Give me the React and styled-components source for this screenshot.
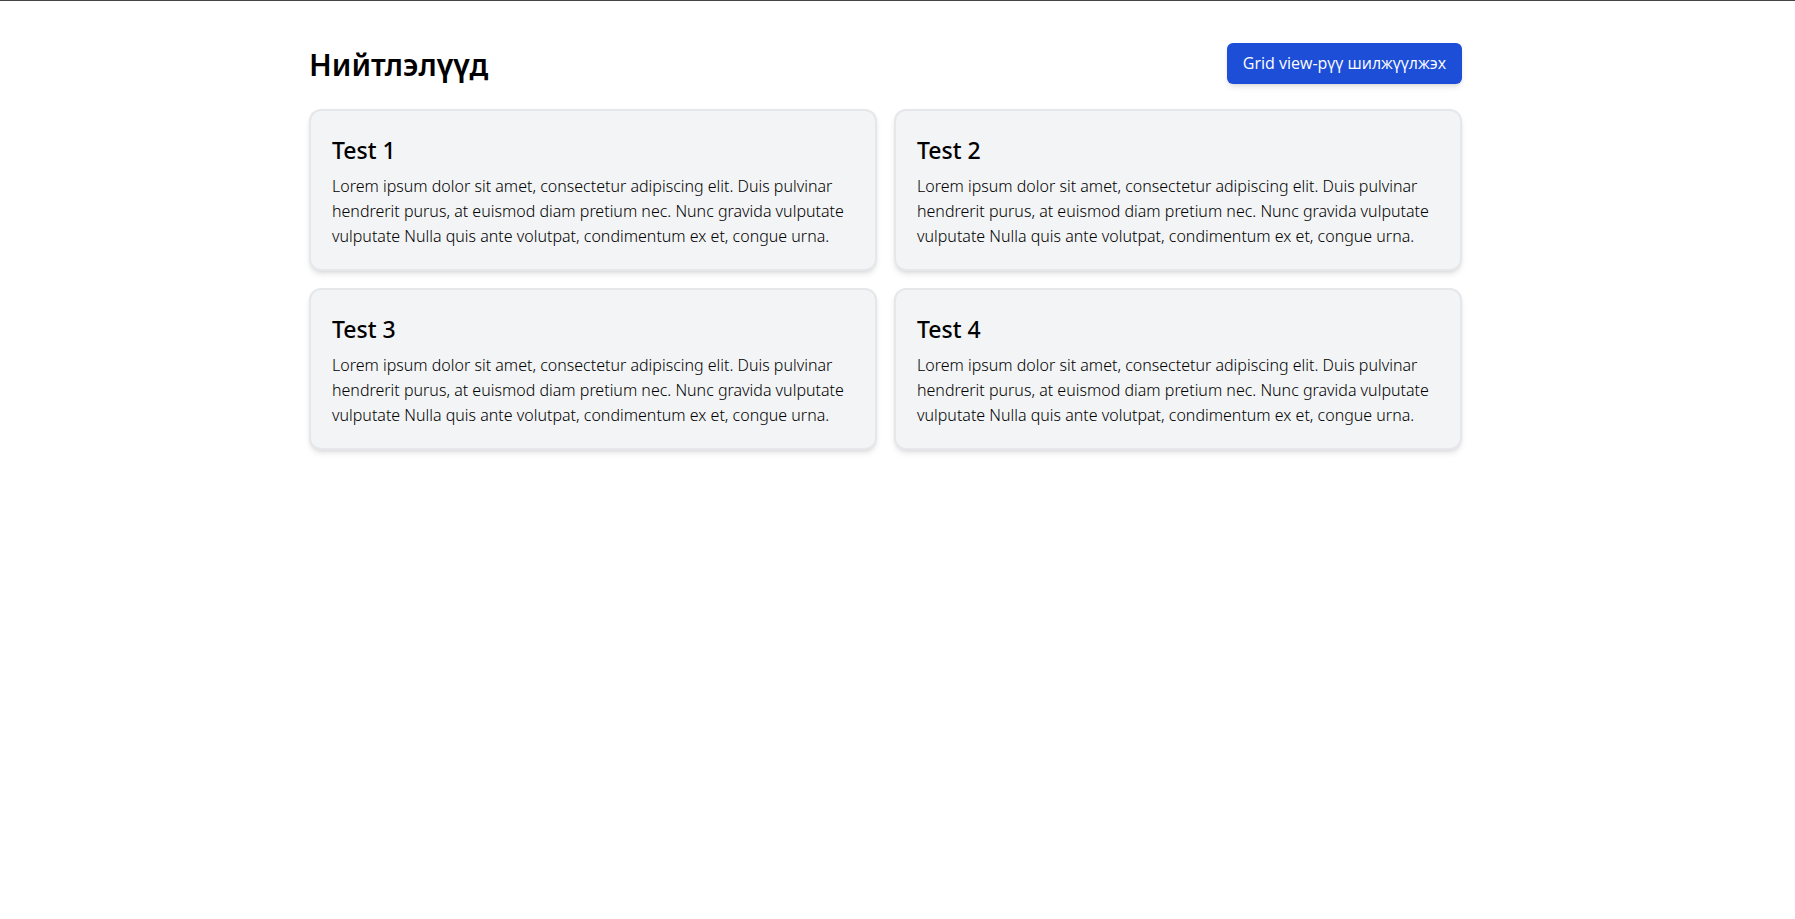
import React from "react";
import styled, { createGlobalStyle } from "styled-components";

const GlobalStyle = createGlobalStyle`
  *, *::before, *::after { box-sizing: border-box; }
  body {
    margin: 0;
    background: #fff;
    color: #000;
    font-family: "Open Sans", "Noto Sans", sans-serif;
    font-size: 16px;
    line-height: 25px;
  }
`;

const Page = styled.div`
  border-top: 1px solid #444346;
  padding: 42px 24px 42px 0;
`;

const Container = styled.main`
  width: 100%;
  max-width: 1153px;
  margin: 0 auto;
`;

const Header = styled.header`
  display: flex;
  align-items: flex-end;
  justify-content: space-between;
  margin-bottom: 25px;
`;

const Heading = styled.h1`
  margin: 0;
  font-family: "Noto Sans", "Open Sans", sans-serif;
  font-size: 30px;
  line-height: 38px;
  font-weight: 600;
`;

const ToggleButton = styled.button`
  border: 0;
  border-radius: 6px;
  padding: 8px 16px;
  background: #1d4ed8;
  color: #fff;
  font: inherit;
  line-height: 25px;
  cursor: pointer;
  box-shadow: 0 4px 6px -1px rgb(0 0 0 / 0.1), 0 2px 4px -2px rgb(0 0 0 / 0.1);
`;

const Grid = styled.div`
  display: grid;
  grid-template-columns: repeat(2, minmax(0, 1fr));
  gap: 17px;
`;

const Card = styled.article`
  border: 2px solid #e5e7eb;
  border-radius: 12px;
  padding: 20px 21px;
  background: #f3f4f6;
  box-shadow: 0 4px 6px -1px rgb(0 0 0 / 0.1), 0 2px 4px -2px rgb(0 0 0 / 0.1);
  font-family: "Noto Sans", "Open Sans", sans-serif;
`;

const CardTitle = styled.h2`
  margin: 0 0 5px;
  font-size: 23px;
  line-height: 38px;
  font-weight: 500;
`;

const CardText = styled.p`
  margin: 0;
  font-weight: 300;
`;

const TEXT =
  "Lorem ipsum dolor sit amet, consectetur adipiscing elit. Duis pulvinar hendrerit purus, at euismod diam pretium nec. Nunc gravida vulputate vulputate Nulla quis ante volutpat, condimentum ex et, congue urna.";

const posts = [1, 2, 3, 4].map((id) => ({ id, title: `Test ${id}`, text: TEXT }));

export default function App() {
  return (
    <>
      <GlobalStyle />
      <Page>
        <Container>
          <Header>
            <Heading>Нийтлэлүүд</Heading>
            <ToggleButton type="button">Grid view-рүү шилжүүлжэх</ToggleButton>
          </Header>
          <Grid>
            {posts.map((post) => (
              <Card key={post.id}>
                <CardTitle>{post.title}</CardTitle>
                <CardText>{post.text}</CardText>
              </Card>
            ))}
          </Grid>
        </Container>
      </Page>
    </>
  );
}
